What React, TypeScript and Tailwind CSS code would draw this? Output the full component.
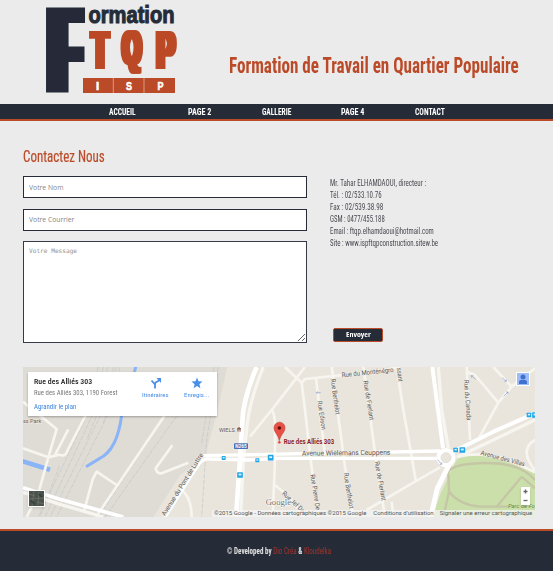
import { useLayoutEffect, useRef, type ReactNode } from "react";

/* A line of text squeezed horizontally to an exact width. */
function Fit({ width, className = "", children }: { width: number; className?: string; children: ReactNode }) {
  const ref = useRef<HTMLSpanElement>(null);
  useLayoutEffect(() => {
    const el = ref.current;
    if (el) el.style.transform = `scaleX(${width / el.offsetWidth})`;
  }, [width]);
  return (
    <span className="flex" style={{ width }}>
      <span ref={ref} className={`block shrink-0 origin-left whitespace-nowrap [font-stretch:50%] ${className}`}>
        {children}
      </span>
    </span>
  );
}

function Logo() {
  return (
    <svg className="block h-[104px] w-[200px]" viewBox="0 0 200 104" fontFamily="'Liberation Sans', sans-serif" fontWeight="bold">
      <defs>
        <filter id="heavy" x="-1" y="-0.2" width="3" height="1.4">
          <feMorphology operator="dilate" radius="8 1" />
        </filter>
        <filter id="bolder" x="-0.3" y="-0.2" width="1.6" height="1.4">
          <feMorphology operator="dilate" radius="3 1" />
        </filter>
      </defs>
      <g filter="url(#heavy)" fill="#252c38">
        <text transform="translate(51 91.7) scale(.375 1)" fontSize="121">F</text>
      </g>
      <text x="88.500" y="22.500" fontSize="24" fill="#252c38" stroke="#252c38" strokeWidth="1.100" textLength="86" lengthAdjust="spacingAndGlyphs">ormation</text>
      <g fill="#bb4a28" fontSize="52" filter="url(#bolder)">
        <text transform="translate(91.7 67.7) scale(.52 1)">T</text>
        <text transform="translate(122.4 63.4) scale(.46 .88)">Q</text>
        <text transform="translate(156.8 67.7) scale(.52 1)">P</text>
      </g>
      <g fill="#bb4a28">
        <rect x="83" y="78" width="92" height="15" />
        <path d="M113.3 78v15M144 78v15" stroke="#d99a84" strokeWidth="1" />
      </g>
      <g fill="#fff" fontSize="11.5" textAnchor="middle" stroke="#fff" strokeWidth=".6">
        <text x="97.5" y="89.5">I</text>
        <text x="129" y="89.5" textLength="6" lengthAdjust="spacingAndGlyphs">S</text>
        <text x="160.5" y="89.5" textLength="6" lengthAdjust="spacingAndGlyphs">P</text>
      </g>
    </svg>
  );
}

function Transit({ x, y, size = 12 }: { x: number; y: number; size?: number }) {
  return (
    <g transform={`translate(${x} ${y})`}>
      <rect x={-size / 2} y={-size / 2} width={size} height={size} rx="2" fill="#1fa5e8" />
      <rect x={-size / 4} y={-size / 4} width={size / 2} height={size / 3} fill="#d8f0fc" />
    </g>
  );
}

function StreetMap() {
  return (
    <svg className="block h-[150px] w-[512px]" viewBox="9 21 1536 450" fontFamily="Roboto, sans-serif">
      <rect x="9" y="21" width="1536" height="450" fill="#e9e5dc" />
      <path d="M9 21H622L585 180 555 290 480 345 400 471H9z" fill="#dfdbd5" />
      <path d="M1315 290Q1390 280 1460 305L1545 340V471H1238L1262 400 1292 335z" fill="#cadfaa" />
      <g fill="none" stroke="#c3c6c4" strokeWidth="2">
        <path d="M235 21 190 190 55 471M250 21 215 170 75 471M262 21 240 170 90 471M280 21 262 168 110 471M290 21 200 240M300 21 250 190M435 168 235 471M470 168 255 471M595 21 560 240 545 471M582 21 545 250M118 318 60 471" strokeDasharray="14 4" />
      </g>
      <g fill="none" stroke="#8ab4f8" strokeWidth="9">
        <path d="M305 165Q292 270 238 296L198 320M348 18 342 40" />
        <path d="M5 303 90 329" strokeWidth="14" />
      </g>
      <g fill="none" stroke="#c5c6a6" strokeWidth="7">
        <path d="M1285 335Q1300 310 1400 309T1545 360M1285 335 1287 395 1270 471M1287 395Q1320 435 1380 440H1465M1430 440 1505 350M1505 350 1545 385" />
      </g>
      <g fill="none" stroke="#f7f5ef" strokeWidth="8" strokeLinejoin="round">
        <path d="M9 125 110 207 85 292 55 400 20 471M9 265 85 292 118 284Q138 292 143 270L200 160M145 208 105 285" />
        <path d="M435 165 228 471M290 375 230 335 218 358 193 450M457 256 407 325Q410 342 425 340L505 308M480 385Q515 410 515 471" />
        <path d="M855 21 755 150 690 230M755 150Q765 160 765 200V300L758 471M795 21 845 68 855 57 940 48 1060 36 1140 21M845 68 855 150 872 300 895 471M888 55 915 285M935 21 955 170 975 320 1000 471M1030 21 1045 130 1068 300 1095 471M1130 21 1150 150 1175 290 1188 365M765 375 800 405 855 471" />
        <path d="M1340 21 1350 240M1340 35 1365 45 1435 128 1378 232M1420 21 1475 80 1435 128M1475 80 1545 25M1260 322 1185 365 1040 450M1115 425 1120 471" />
        <path d="M1315 290Q1390 272 1470 300L1545 337M1545 240Q1495 270 1545 330" />
        <path d="M730 21Q690 120 682 190L670 300 662 471M1255 21 1265 150 1285 265M1310 292 1420 240 1545 180" strokeWidth="10" />
        <path d="M9 397 120 433 250 471" strokeWidth="10" />
      </g>
      <g fill="none" stroke="#fff" strokeLinejoin="round">
        <path d="M9 383 120 418 310 471" strokeWidth="11" />
        <path d="M433 475 505 360 538 310Q550 295 570 297L690 300 770 295H1270M545 287 840 281 1020 278 1260 273" strokeWidth="10" />
        <path d="M710 21Q668 120 667 190L660 300 648 471" strokeWidth="14" />
        <path d="M1237 21 1254 150 1269 265M1300 275 1420 215 1545 160" strokeWidth="12" />
        <path d="M1287 315 1252 385 1232 471" strokeWidth="15" />
      </g>
      <circle cx="1278" cy="293" r="22" fill="#e9e5dc" stroke="#fff" strokeWidth="14" />
      <circle cx="1278" cy="293" r="15" fill="none" stroke="#ddd8ce" strokeWidth="2" />
      <Transit x={611} y={294} />
      <Transit x={712} y={301} />
      <Transit x={752} y={293} size={17} />
      <Transit x={660} y={345} size={17} />
      <Transit x={1307} y={270} size={14} />
      <Transit x={1327} y={270} size={17} />
      <Transit x={1527} y={165} size={14} />
      <Transit x={1545} y={165} size={17} />
      <g fill="none" stroke="#8d9ad2" strokeWidth="2">
        <path d="M902 98H889l4-4M889 98l4 4" />
        <path d="M1367 58 1354 47h6M1354 47v6M1446 53l13 11h-6M1459 64v-6M1451 109l13-13h-6M1464 96v6M1253 299l12 14h-6M1265 313v-6" />
      </g>
      <rect x="642" y="250" width="42" height="17" rx="2" fill="#4273b8" />
      <text x="646" y="264" fontSize="14" fontWeight="bold" fill="#fff" textLength="34" lengthAdjust="spacingAndGlyphs">N265</text>
      <g fill="#5d5a56" fontSize="20" stroke="#f1eee8" strokeWidth="3" paintOrder="stroke">
        <text x="9" y="189" fontSize="18" textLength="55" lengthAdjust="spacingAndGlyphs">ss Park</text>
        <text x="597" y="215" fontSize="18" textLength="47" lengthAdjust="spacingAndGlyphs">WIELS</text>
        <text x="435" y="469" textLength="218" lengthAdjust="spacingAndGlyphs" transform="rotate(-58 435 469)">Avenue du Pont de Luttre</text>
        <text x="966" y="52" textLength="156" lengthAdjust="spacingAndGlyphs" transform="rotate(-6 966 52)">Rue du Monténégro</text>
        <text x="892" y="124" textLength="87" lengthAdjust="spacingAndGlyphs" transform="rotate(81 892 124)">Rue Edison</text>
        <text x="932" y="58" textLength="107" lengthAdjust="spacingAndGlyphs" transform="rotate(82 932 58)">Rue Berthelot</text>
        <text x="971" y="340" textLength="107" lengthAdjust="spacingAndGlyphs" transform="rotate(81 971 340)">Rue Berthelot</text>
        <text x="871" y="344" textLength="108" lengthAdjust="spacingAndGlyphs" transform="rotate(81 871 344)">Rue Pierre De</text>
        <text x="1030" y="63" textLength="120" lengthAdjust="spacingAndGlyphs" transform="rotate(81 1030 63)">Rue de Fierlant</text>
        <text x="1064" y="305" textLength="120" lengthAdjust="spacingAndGlyphs" transform="rotate(80 1064 305)">Rue de Fierlant</text>
        <text x="1130" y="24" textLength="42" lengthAdjust="spacingAndGlyphs" transform="rotate(83 1130 24)">ssant</text>
        <text x="1332" y="60" textLength="122" lengthAdjust="spacingAndGlyphs" transform="rotate(86 1332 60)">Rue du Canada</text>
        <text x="846" y="287" fontSize="21" textLength="265" lengthAdjust="spacingAndGlyphs" transform="rotate(-.6 846 287)">Avenue Wielemans Ceuppens</text>
        <text x="1381" y="284" textLength="136" lengthAdjust="spacingAndGlyphs" transform="rotate(15 1381 284)">Avenue des Villas</text>
        <text x="785" y="402" textLength="85" lengthAdjust="spacingAndGlyphs" transform="rotate(43 785 402)">Rue Jef De</text>
        <text x="1464" y="444" fontSize="18" fontStyle="italic" fill="#5c8a4a" stroke="#cadfaa" textLength="80" lengthAdjust="spacingAndGlyphs">Parc de Fo</text>
      </g>
      <path d="M651 207l6-5 6 5zM652 209h10M653 215v-6M657 215v-6M661 215v-6" stroke="#8d5b50" strokeWidth="2" fill="#8d5b50" />
      <text x="737" y="436" fontSize="27" fill="#6d6d6d" stroke="#fff" strokeWidth="3" paintOrder="stroke" fontFamily="'Liberation Serif', serif" textLength="76" lengthAdjust="spacingAndGlyphs">Google</text>
      <path d="M778 244C775 222 762 219 762 203A16.500 16.500 0 0 1 795 203C795 219 781 222 778 244z" fill="#ea4f45" stroke="#b2352d" strokeWidth="1.500" />
      <circle cx="778" cy="204" r="5.500" fill="#5c0f0d" />
      <circle cx="778" cy="247" r="4.500" fill="#e04438" stroke="#fff" />
      <text x="791" y="253" fontSize="19" fontWeight="bold" fill="#8c1a17" stroke="#f3efe8" strokeWidth="2" paintOrder="stroke" textLength="152" lengthAdjust="spacingAndGlyphs">Rue des Alliés 303</text>
      <rect x="576" y="450" width="969" height="21" fill="#f5f5f5" fillOpacity=".72" />
      <g fill="#555" fontSize="17.500">
        <text x="582" y="465" textLength="457" lengthAdjust="spacingAndGlyphs">©2015 Google - Données cartographiques ©2015 Google</text>
        <text x="1060" y="465" textLength="181" lengthAdjust="spacingAndGlyphs">Conditions d'utilisation</text>
        <text x="1259" y="465" textLength="278" lengthAdjust="spacingAndGlyphs">Signaler une erreur cartographique</text>
      </g>
    </svg>
  );
}

function MapPanel() {
  return (
    <section className="relative mx-[23px] mt-[24px] h-[150px] w-[512px] overflow-hidden font-['Roboto',sans-serif]">
      <StreetMap />
      <div className="absolute left-[5px] top-[5px] flex h-[44px] w-[189px] bg-white pl-[6px] shadow-[0_1px_2px_rgba(0,0,0,0.3)]">
        <div className="w-[101px] pt-[4px]">
          <Fit width={58} className="text-[7.5px] leading-[11px] font-medium text-[#222]">Rue des Alliés 303</Fit>
          <Fit width={84} className="text-[6.5px] leading-[12px] text-[#777]">Rue des Alliés 303, 1190 Forest</Fit>
          <Fit width={42} className="text-[6.5px] leading-[16px] text-[#3a84df]">Agrandir le plan</Fit>
        </div>
        <div className="flex w-[41px] flex-col items-center pt-[5px] text-[#4a8fe7]">
          <svg className="size-[12px]" viewBox="0 0 12 12" fill="none" stroke="currentColor" strokeWidth="1.800">
            <path d="M5 11.500V7.500L1.500 3.500M5 7.500 5.500 5.500 9 3.500" />
            <path d="M6.500 1H11v5z" fill="currentColor" stroke="none" />
          </svg>
          <Fit width={27} className="text-[6px] leading-[12px]">Itinéraires</Fit>
        </div>
        <div className="flex w-[41px] flex-col items-center pt-[5px] text-[#4a8fe7]">
          <svg className="size-[12px]" viewBox="0 0 12 12" fill="currentColor">
            <path d="M6 .5 7.500 4.300 11.500 4.600 8.400 7.200 9.400 11.200 6 9 2.600 11.200 3.600 7.200.5 4.600 4.500 4.300z" />
          </svg>
          <Fit width={25} className="text-[6px] leading-[12px]">Enregis...</Fit>
        </div>
      </div>
      <div className="absolute left-[5px] top-[123px] size-[17px] border border-white bg-[#4c524c] shadow">
        <svg className="size-full" viewBox="0 0 15 15" stroke="#717970" strokeWidth=".7">
          <path d="M0 8 15 7M5 0 3 15M10 1 9 14M0 3 6 5M8 11 15 13" />
          <path d="M2 10 6 13M10 3 13 6" stroke="#354338" strokeWidth="2" />
        </svg>
      </div>
      <div className="absolute left-[493px] top-[5px] size-[14px] border border-white bg-[#9cbcf7]">
        <svg className="size-full" viewBox="0 0 12 12" fill="#3f70d0">
          <circle cx="6" cy="4" r="2.500" />
          <path d="M2 11V9q0-2 2-2h4q2 0 2 2v2z" />
        </svg>
      </div>
      <div className="absolute left-[498px] top-[120px] flex h-[18px] w-[9px] flex-col items-center justify-around bg-white text-[#666] shadow-sm">
        <svg className="size-[5px]" viewBox="0 0 5 5" stroke="currentColor" strokeWidth="1.300"><path d="M.5 2.500h4M2.500.5v4" /></svg>
        <svg className="size-[5px]" viewBox="0 0 5 5" stroke="currentColor" strokeWidth="1.300"><path d="M.5 2.500h4" /></svg>
      </div>
    </section>
  );
}

const menu = [
  { label: "ACCUEIL", width: 27, gap: 52 },
  { label: "PAGE 2", width: 23, gap: 50.5 },
  { label: "GALLERIE", width: 29, gap: 50.5 },
  { label: "PAGE 4", width: 23, gap: 50.5 },
  { label: "CONTACT", width: 29.5, gap: 0 },
];

const details = [
  { text: "Mr. Tahar ELHAMDAOUI, directeur :", width: 96 },
  { text: "Tél. : 02/533.10.76", width: 51.5 },
  { text: "Fax : 02/539.38.98", width: 53.5 },
  { text: "GSM : 0477/455.188", width: 55 },
  { text: "Email : ftqp.elhamdaoui@hotmail.com", width: 104 },
  { text: "Site : www.ispftqpconstruction.sitew.be", width: 108 },
];

export default function App() {
  return (
    <div className="flex h-[571px] w-[553px] flex-col overflow-hidden bg-[#ebebeb] font-['Roboto',sans-serif]">
      <header className="flex h-[104px] shrink-0">
        <Logo />
        <h1 className="pl-[29px] pt-[50.5px] text-[22px] leading-[30px] font-bold text-[#bb4a28]">
          <Fit width={290}>Formation de Travail en Quartier Populaire</Fit>
        </h1>
      </header>
      <nav className="flex h-[17px] shrink-0 border-b-2 border-[#bb4a28] bg-[#252c38] pl-[109px] text-[9.5px] leading-[15px] font-bold text-white">
        {menu.map((m) => (
          <a key={m.label} style={{ marginRight: m.gap }}>
            <Fit width={m.width}>{m.label}</Fit>
          </a>
        ))}
      </nav>
      <main>
        <h2 className="pl-[23px] pt-[24px] text-[16.5px] leading-[24px] text-[#bb4a28]">
          <Fit width={82} className="[-webkit-text-stroke:0.2px_#bb4a28]">Contactez Nous</Fit>
        </h2>
        <div className="flex pl-[23px] pt-[7px]">
          <form className="flex w-[284px] flex-col">
            <input className="h-[22px] border border-[#252c38] bg-white px-[5px] font-['Open_Sans',sans-serif] text-[6.8px] placeholder:text-[#858585]" placeholder="Votre Nom" />
            <input className="mt-[11px] h-[22px] border border-[#252c38] bg-white px-[5px] pb-[2px] font-['Open_Sans',sans-serif] text-[6.8px] placeholder:text-[#858585]" placeholder="Votre Courrier" />
            <textarea className="mt-[10px] h-[102px] resize border border-[#343b48] bg-white px-[5px] py-[4px] font-['DejaVu_Sans_Mono',monospace] text-[6.15px] leading-[9px] placeholder:text-[#909090]" placeholder="Votre Message" />
          </form>
          <div className="flex flex-col pl-[23px]">
            <address className="pt-[1px] text-[9.8px] leading-[12px] not-italic text-[#4a4a52]">
              {details.map((d) => (
                <Fit key={d.text} width={d.width}>{d.text}</Fit>
              ))}
            </address>
            <button className="mt-[79px] ml-[3px] flex h-[14px] w-[50px] items-center justify-center rounded-[2px] border border-[#bb4a28] bg-[#252c38] font-['Open_Sans',sans-serif] text-[7px] font-bold text-white">
              <Fit width={25}>Envoyer</Fit>
            </button>
          </div>
        </div>
        <MapPanel />
      </main>
      <footer className="mt-[12px] flex h-[42px] shrink-0 border-t-2 border-[#bb4a28] bg-[#252c38] pl-[227px] text-[9.5px] leading-[40px] font-bold text-[#e2e2e2]">
        <Fit width={104}>
          © Developed by <a className="font-normal text-[#a3342c]">Dio Créa</a> &amp; <a className="font-normal text-[#a3342c]">Kloudelka</a>
        </Fit>
      </footer>
    </div>
  );
}
